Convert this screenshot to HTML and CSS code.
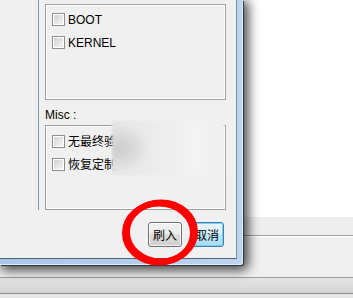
FILE: index.html
```html
<!DOCTYPE html>
<html lang="zh-CN">
<head>
    <meta charset="UTF-8">
    <title>刷入</title>
    <link rel="stylesheet" href="styles.css">
</head>
<body>

<div class="desk">
    <div class="bgwin">
        <div class="bg-view"></div>
        <div class="bg-bar"></div>
        <div class="bg-foot"><button class="btn bg-btn"></button></div>
        <div class="bg-status"></div>
    </div>

    <div class="dialog">
        <div class="client">
            <div class="panel">
                <div class="panel-in">
                    <div class="group g1">
                        <label class="check"><span class="box"></span>BOOT</label>
                        <label class="check"><span class="box"></span>KERNEL</label>
                    </div>
                    <div class="caption">Misc :</div>
                    <div class="group g2">
                        <label class="check"><span class="box"></span>无最终验证</label>
                        <label class="check"><span class="box"></span>恢复定制</label>
                    </div>
                </div>
            </div>
            <div class="actions">
                <button class="btn">刷入</button>
                <button class="btn default">取消</button>
            </div>
            <div class="blur"></div>
        </div>
    </div>

    <svg class="mark" width="353" height="298" viewBox="0 0 353 298">
        <ellipse cx="161" cy="232" rx="34" ry="29.5" fill="none" stroke="#f00" stroke-width="6"/>
        <ellipse cx="159" cy="233" rx="34" ry="29.5" fill="none" stroke="#f00" stroke-width="6"/>
    </svg>
</div>

</body>
</html>
```

FILE: styles.css
```css
* {
    box-sizing: border-box;
}
body {
    margin: 0;
    font-family: "Liberation Sans", "Noto Sans CJK SC", sans-serif;
    font-size: 12px;
    color: #000;
}
.desk {
    position: relative;
    width: 353px;
    height: 298px;
    overflow: hidden;
    background: #fff;
}

/* window behind the dialog */
.bgwin {
    display: flex;
    flex-direction: column;
    height: 298px;
}
.bg-view {
    height: 217px;
    background: #fff;
}
.bg-bar {
    height: 19px;
    background: #eeeeee;
    border-bottom: 1px solid #a0a0a0;
}
.bg-foot {
    height: 41px;
    background: #f0f0f0;
    border-top: 1px solid #fff;
    display: flex;
    justify-content: flex-end;
    align-items: flex-start;
    padding-top: 8px;
}
.bg-btn {
    width: 77px;
    height: 24px;
    margin-right: -60px;
    position: relative;
}
.bg-btn::after {
    content: "";
    position: absolute;
    left: 15px;
    top: 11px;
    width: 3px;
    height: 2px;
    background: #d89a3c;
}
.bg-status {
    flex: 1;
    border-top: 1px solid #9c9c9c;
    background: linear-gradient(#e6e6e6, #d3d3d3 15px, #8c8c8c 15px, #8c8c8c 16px, #e6e6e6 16px);
}

/* dialog */
.dialog {
    position: absolute;
    left: 0;
    top: 0;
    padding: 0 5px 5px 0;
    background: linear-gradient(90deg, #a9c7e9, #bcd4ee);
    border-right: 1px solid #e4edf7;
    border-bottom: 1px solid #e4edf7;
    border-bottom-right-radius: 3px;
    box-shadow: 1px 1px 0 #2d3a46, 3px 3px 12px 2px rgba(0, 0, 0, 0.75);
}
.client {
    position: relative;
    width: 237px;
    height: 259px;
    background: #f0f0f0;
    border-right: 1px solid #7b8fa5;
    border-bottom: 1px solid #4e6274;
}
.panel {
    margin-left: 35px;
    height: 210px;
    border-left: 1px solid #dfe6ee;
    padding-left: 2px;
}
.panel-in {
    height: 100%;
    border-left: 1px solid #8796a8;
    padding: 4px 0 0 6px;
}
.group {
    width: 181px;
    border: 1px solid #a0a0a0;
    box-shadow: inset 0 0 0 1px #fff;
    padding: 8px 0 0 6px;
}
.g1 {
    height: 96px;
}
.g2 {
    height: 85px;
    padding-top: 9px;
}
.check {
    display: flex;
    align-items: center;
    gap: 3px;
    height: 13px;
    line-height: 14px;
    margin-bottom: 10px;
    white-space: nowrap;
}
.box {
    flex: none;
    width: 13px;
    height: 13px;
    border: 1px solid #8f8f8f;
    background: linear-gradient(135deg, #cfcfcf, #f8f8f8);
    box-shadow: inset 0 0 0 1px #fff;
}
.caption {
    height: 14px;
    line-height: 14px;
    margin: 8px 0 3px;
}
.actions {
    display: flex;
    justify-content: flex-end;
    gap: 8px;
    padding-right: 12px;
    margin-top: 12px;
}
.btn {
    width: 34px;
    height: 25px;
    padding: 0;
    border: 1px solid #707070;
    border-radius: 3px;
    background: linear-gradient(#f2f2f2, #ebebeb 50%, #dddddd 50%, #cfcfcf);
    box-shadow: inset 0 0 0 1px rgba(255, 255, 255, 0.7);
    font: inherit;
    color: #000;
}
.btn.default {
    border-color: #3c7fb1;
    background: linear-gradient(#eaf6fd, #d9f0fc 50%, #bee6fd 50%, #a7d9f5);
    box-shadow: inset 0 0 0 1px #7fd0f5;
}
.blur {
    position: absolute;
    left: 112px;
    top: 121px;
    width: 112px;
    height: 54px;
    background:
        radial-gradient(ellipse 30px 24px at 8px 50%, #cdcdcd, rgba(230, 230, 230, 0)),
        linear-gradient(90deg, #e4e4e4, #f3f3f3 75%, #efefef);
    filter: blur(1px);
}

.mark {
    position: absolute;
    left: 0;
    top: 0;
    pointer-events: none;
}
```
